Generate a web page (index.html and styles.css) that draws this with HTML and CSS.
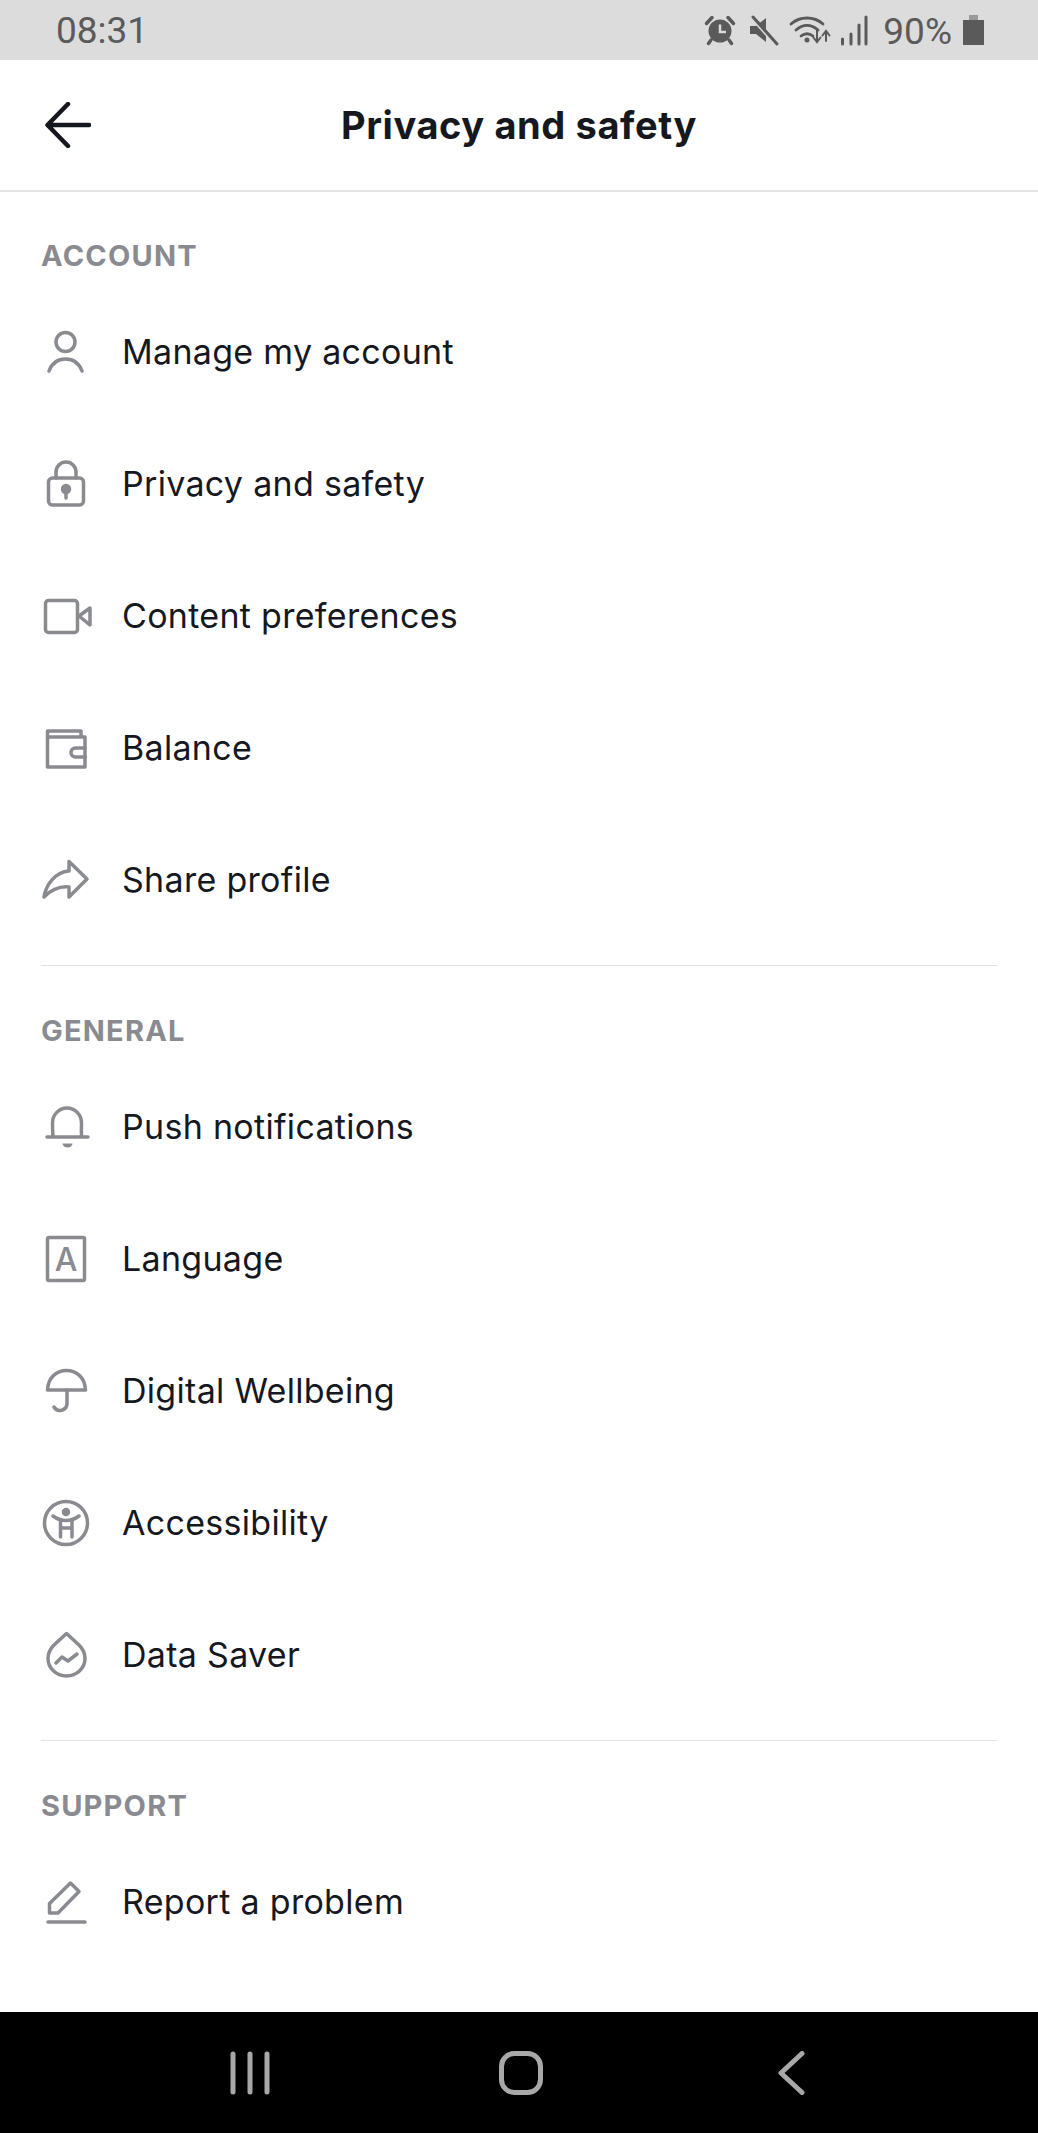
FILE: index.html
```html
<!DOCTYPE html>
<html lang="en">
<head>
<meta charset="utf-8">
<title>Privacy and safety</title>
<link rel="stylesheet" href="styles.css">
</head>
<body>
<div class="screen">
  <div class="status">
    <span class="time">08:31</span>
    <div class="status-right">
      <svg class="s-alarm" viewBox="0 0 30 30"><circle cx="15" cy="16" r="11.500"/><path class="cut" d="M15 9.500V17H21"/><path class="ear" d="M1.500 8.500L7 2.500M28.500 8.500L23 2.500M6 25L3.500 28.500M24 25L26.500 28.500"/></svg>
      <svg class="s-mute" viewBox="0 0 28 30"><path d="M0 11H6L16 3V27L6 19H0Z"/><path class="cut" d="M1 2L25 29"/><path class="ear" d="M3 2L27 29"/></svg>
      <svg class="s-wifi" viewBox="0 0 40 30"><path class="ln" d="M1 9C10 1 24 1 33 9M6 15C13 9 21 9 28 15M11 21C15 18 19 18 23 21"/><circle class="dot" cx="17" cy="25" r="2.500"/><path class="ln thin" d="M27 15V26M23.500 22.500L27 27L30.500 22.500M36 26V17M32.500 20.500L36 16L39.500 20.500"/></svg>
      <svg class="s-signal" viewBox="0 0 28 30"><path class="bar" d="M2.500 24V29M11 19V29M19 10V29M26 2V29"/></svg>
      <span class="pct">90%</span>
      <svg class="s-batt" viewBox="0 0 21 30"><rect class="nub" x="6" y="0" width="9" height="5"/><rect class="cell" x="0" y="5" width="21" height="25"/></svg>
    </div>
  </div>

  <header class="topbar">
    <svg class="back" viewBox="0 0 46 46"><path d="M44 23H3M23 2L2.500 23L23 44"/></svg>
    <h1 class="title">Privacy and safety</h1>
  </header>

  <section class="group">
    <h2 class="label">ACCOUNT</h2>
    <div class="row"><svg class="ico" viewBox="0 0 48 48"><circle cx="24.500" cy="15" r="9.500"/><path d="M8 44C11 36 17 32 24.500 32S38 36 41 44"/></svg><span class="row-text">Manage my account</span></div>
    <div class="row"><svg class="ico" viewBox="0 0 48 48"><rect x="7.500" y="19" width="35" height="27" rx="4"/><path d="M15 19V13A10 10 0 0 1 35 13V19"/><circle class="fill" cx="25" cy="30" r="3.500"/><path d="M25 30V39"/></svg><span class="row-text">Privacy and safety</span></div>
    <div class="row"><svg class="ico" viewBox="0 0 48 48"><rect x="4.500" y="9.500" width="32" height="32" rx="3"/><path d="M38 25L49 17V34Z"/></svg><span class="row-text">Content preferences</span></div>
    <div class="row"><svg class="ico" viewBox="0 0 48 48"><path d="M6.500 14V44H44V14H6.500V8H40V14"/><path d="M44 25H34.500A4.500 4.500 0 0 0 34.500 34H44"/></svg><span class="row-text">Balance</span></div>
    <div class="row"><svg class="ico" viewBox="0 0 48 48"><path d="M28 6.500L46 24L28 42V32C18 31 10 35 3 42C5 30 14 17 28 16Z"/></svg><span class="row-text">Share profile</span></div>
  </section>

  <section class="group">
    <h2 class="label">GENERAL</h2>
    <div class="row"><svg class="ico" viewBox="0 0 48 48"><path d="M6 35H47M12 35C12 33 11.500 30 11.500 21A14.500 15 0 0 1 40.500 21C40.500 30 40 33 41 35"/><path class="fill-only" d="M21.500 41.500H31.500A5 4 0 0 1 21.500 41.500Z"/></svg><span class="row-text">Push notifications</span></div>
    <div class="row"><svg class="ico" viewBox="0 0 48 48"><rect x="6.500" y="3.500" width="37" height="43" rx="1.500"/><text class="ico-a" x="25" y="37">A</text></svg><span class="row-text">Language</span></div>
    <div class="row"><svg class="ico" viewBox="0 0 48 48"><path d="M6.500 24C7 12 15 4.500 25.500 4.500S44 12 44.500 24Z"/><path d="M26 24V38A7 7 0 0 1 13 41"/></svg><span class="row-text">Digital Wellbeing</span></div>
    <div class="row"><svg class="ico" viewBox="0 0 48 48"><circle cx="25" cy="25" r="21.500"/><circle class="fill" cx="25" cy="14" r="2.500"/><path d="M12 18C16 21 20 22.500 25 22.500S34 21 38 18M19.500 22V39M31 22V39M19.500 30H31"/></svg><span class="row-text">Accessibility</span></div>
    <div class="row"><svg class="ico" viewBox="0 0 48 48"><path d="M25.500 3.500L38 15C42 19 44 24 44 28.500C44 38 36 46 25.500 46S7 38 7 28.500C7 24 9 19 13 15Z"/><path d="M15 33L21 27L27 31L36 24"/></svg><span class="row-text">Data Saver</span></div>
  </section>

  <section class="group last">
    <h2 class="label">SUPPORT</h2>
    <div class="row"><svg class="ico" viewBox="0 0 48 48"><path d="M8.500 36V26.500L29.500 6L38 14.500L17 36Z"/><path d="M7 45H44"/></svg><span class="row-text">Report a problem</span></div>
  </section>

  <nav class="navbar">
    <svg class="n-menu" viewBox="0 0 44 44"><path d="M4 3V41M21 3V41M38 3V41"/></svg>
    <svg class="n-home" viewBox="0 0 44 44"><rect x="2.500" y="2.500" width="39" height="39" rx="13"/></svg>
    <svg class="n-back" viewBox="0 0 28 44"><path d="M25 2.500L4 22L25 41.500"/></svg>
  </nav>
</div>
</body>
</html>
```
FILE: styles.css
```css
* { box-sizing: border-box; }
html, body { margin: 0; padding: 0; background: #fff; }
.screen {
  width: 1038px;
  height: 2133px;
  display: flex;
  flex-direction: column;
  font-family: "Inter", "Liberation Sans", sans-serif;
  overflow: hidden;
}

/* status bar */
.status {
  height: 60px;
  background: #dcdcdc;
  display: flex;
  align-items: center;
  justify-content: space-between;
  padding: 2px 54px 0 56px;
  color: #5a5a5a;
  font-family: "Roboto", sans-serif;
}
.time { font-size: 37px; line-height: 58px; }
.status-right { display: flex; align-items: center; margin-top: -2px; }
.status-right svg { height: 30px; display: block; overflow: visible; }
.s-alarm { width: 30px; }
.s-alarm circle { fill: #5a5a5a; }
.s-alarm .cut { fill: none; stroke: #dcdcdc; stroke-width: 2.500; }
.s-alarm .ear { fill: none; stroke: #5a5a5a; stroke-width: 3.500; stroke-linecap: round; }
.s-mute { width: 28px; margin-left: 15px; }
.s-mute path { fill: #5a5a5a; }
.s-mute .cut { fill: none; stroke: #dcdcdc; stroke-width: 3; }
.s-mute .ear { fill: none; stroke: #5a5a5a; stroke-width: 3; stroke-linecap: round; }
.s-wifi { width: 40px; margin-left: 12px; }
.s-wifi .ln { fill: none; stroke: #5a5a5a; stroke-width: 2.800; stroke-linecap: round; }
.s-wifi .thin { stroke-width: 2; }
.s-wifi .dot { fill: #5a5a5a; }
.s-signal { width: 28px; margin-left: 10px; }
.s-signal .bar { fill: none; stroke: #5a5a5a; stroke-width: 3; stroke-linecap: round; }
.pct { font-size: 37px; line-height: 60px; margin-left: 15px; padding-top: 3px; }
.s-batt { width: 21px; margin-left: 11px; }
.s-batt .nub { fill: #9a9a9a; }
.s-batt .cell { fill: #5a5a5a; }

/* top bar */
.topbar {
  position: relative;
  height: 132px;
  flex: none;
  border-bottom: 2px solid #e4e4e4;
  display: flex;
  align-items: center;
  justify-content: center;
}
.back {
  position: absolute;
  left: 45px;
  top: 42px;
  width: 46px;
  height: 46px;
  fill: none;
  stroke: #16181f;
  stroke-width: 4.500;
  stroke-linecap: round;
  stroke-linejoin: round;
}
.title {
  margin: 0;
  font-size: 38px;
  font-weight: 700;
  letter-spacing: 0.6px;
  color: #16181f;
}

/* list */
.group {
  margin: 0 41px;
  padding-bottom: 20px;
  border-bottom: 1px solid #e2e2e2;
}
.group.last { border-bottom: 0; padding-bottom: 0; flex: 1; }
.label {
  margin: 0;
  height: 94px;
  padding-top: 43px;
  font-size: 29px;
  line-height: 44px;
  font-weight: 700;
  letter-spacing: 1.2px;
  color: #8a8b91;
}
.group:first-of-type .label {
  height: 93px;
  padding-top: 42px;
}
.row {
  height: 132px;
  display: flex;
  align-items: center;
  gap: 33px;
}
.row-text {
  font-size: 34px;
  letter-spacing: 0.3px;
  color: #16181f;
}
.ico {
  width: 48px;
  height: 48px;
  flex: none;
  overflow: visible;
  fill: none;
  stroke: #8a8b91;
  stroke-width: 3.500;
  stroke-linecap: round;
  stroke-linejoin: round;
}
.ico .fill { fill: #8a8b91; }
.ico .fill-only { fill: #8a8b91; stroke: none; }
.ico-a {
  fill: #8a8b91;
  stroke: none;
  font-family: "Inter", sans-serif;
  font-size: 32px;
  font-weight: 500;
  text-anchor: middle;
}

/* bottom nav */
.navbar {
  height: 121px;
  flex: none;
  background: #000;
  display: flex;
  align-items: center;
  padding-left: 229px;
}
.navbar svg { height: 44px; display: block; fill: none; stroke: #a8a8a8; stroke-width: 5; stroke-linecap: round; stroke-linejoin: round; }
.n-menu { width: 44px; }
.n-home { width: 44px; margin-left: 226px; }
.n-back { width: 28px; margin-left: 234px; }
```
